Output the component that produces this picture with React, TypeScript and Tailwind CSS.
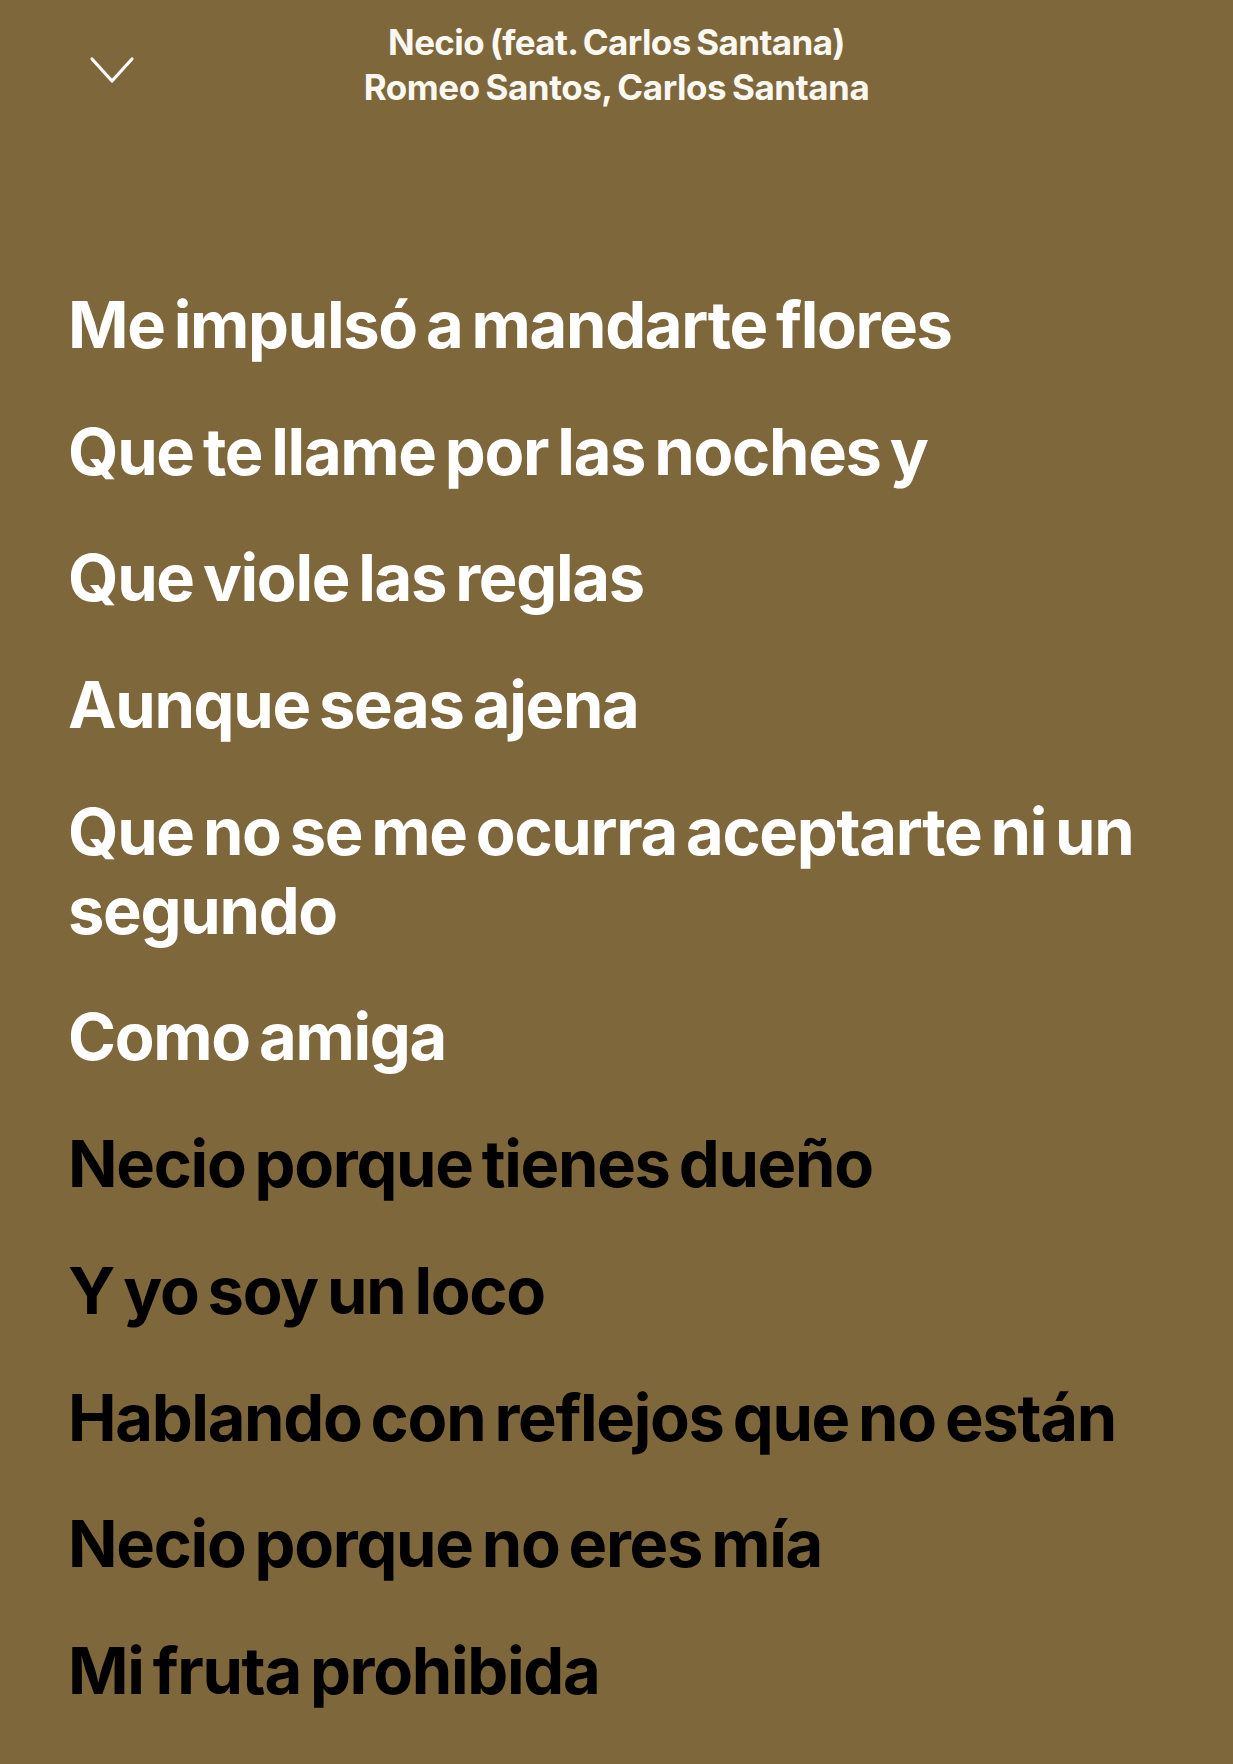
import React from "react";

type Line = { text: string; sung: boolean };

const lines: Line[] = [
  { text: "Me impulsó a mandarte flores", sung: true },
  { text: "Que te llame por las noches y", sung: true },
  { text: "Que viole las reglas", sung: true },
  { text: "Aunque seas ajena", sung: true },
  { text: "Que no se me ocurra aceptarte ni un segundo", sung: true },
  { text: "Como amiga", sung: true },
  { text: "Necio porque tienes dueño", sung: false },
  { text: "Y yo soy un loco", sung: false },
  { text: "Hablando con reflejos que no están", sung: false },
  { text: "Necio porque no eres mía", sung: false },
  { text: "Mi fruta prohibida", sung: false },
];

function ChevronDown() {
  return (
    <svg width="46" height="28" viewBox="0 0 46 28" fill="none">
      <path d="M3 3 L23 25 L43 3" stroke="#ffffff" strokeWidth="3.2" strokeLinecap="round" strokeLinejoin="round" />
    </svg>
  );
}

export default function App() {
  return (
    <div
      className="w-[1233px] h-[1764px] overflow-hidden bg-[#7e673b]"
      style={{ fontFamily: "Inter, 'Noto Sans', sans-serif" }}
    >
      <header className="relative h-[140px]">
        <button className="absolute left-[89px] top-[56px]">
          <ChevronDown />
        </button>
        <div className="pt-[20px] flex flex-col items-center text-[#fbf8f2]">
          <div className="text-[35px] leading-[45px] font-bold tracking-[-0.018em] [word-spacing:-2px]">
            Necio (feat. Carlos Santana)
          </div>
          <div className="text-[35px] leading-[45px] font-bold tracking-[-0.013em] [word-spacing:-2px]">
            Romeo Santos, Carlos Santana
          </div>
        </div>
      </header>
      <div className="h-[145px]" />
      <div className="px-[68px] flex flex-col gap-[47.7px]">
        {lines.map((l) => (
          <p
            key={l.text}
            className={
              "text-[65px] leading-[79px] font-bold tracking-[-0.02em] [word-spacing:-5px] " +
              (l.sung ? "text-white" : "text-black")
            }
          >
            {l.text}
          </p>
        ))}
      </div>
    </div>
  );
}
